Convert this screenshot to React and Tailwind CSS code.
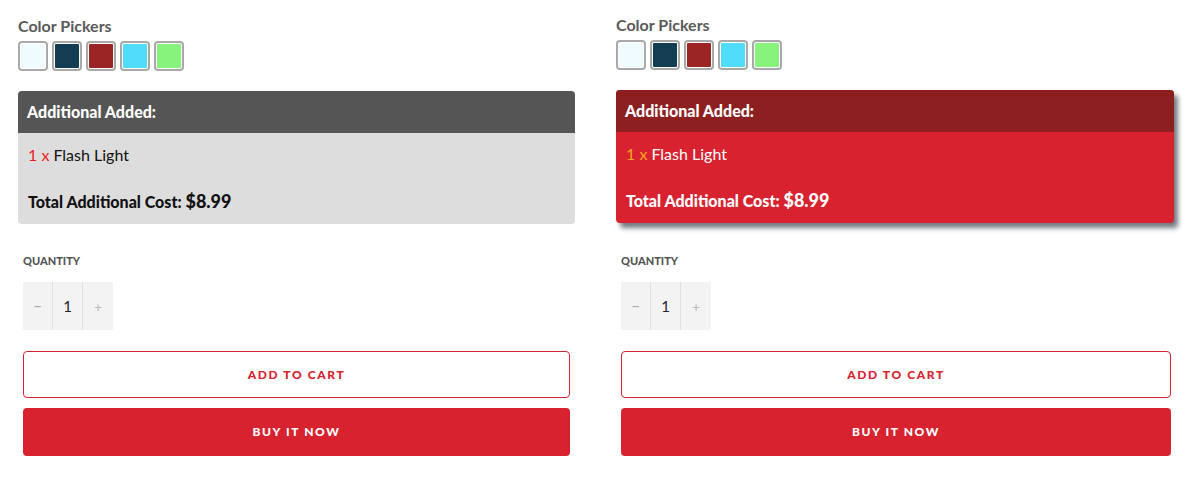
// App.jsx — two side-by-side product option panels (neutral / highlighted)

import React from 'react';

const SWATCHES = ['#f0fbff', '#123d52', '#9b2525', '#50dcfb', '#88f37c'];

function Swatch({ color }) {
  return (
    <div className="w-[30px] h-[30px] rounded-[4px] border-2 border-[#a9a9a9] bg-white p-px">
      <div className="w-full h-full rounded-[1px]" style={{ backgroundColor: color }} />
    </div>
  );
}

function AddedBox({ highlighted }) {
  // highlighted: red theme with a drop shadow, otherwise gray
  const wrap = highlighted
    ? 'bg-[#d8222f] text-white shadow-[4px_5px_5px_rgba(40,50,60,0.65)]'
    : 'bg-[#dddddd] text-[#111]';
  const head = highlighted ? 'bg-[#8e1f20]' : 'bg-[#555555]';
  const qty = highlighted ? 'text-[#f5a623]' : 'text-[#ee1c25]';
  return (
    <div className={`rounded-[4px] overflow-hidden ${wrap}`}>
      <div className={`h-[42px] flex items-center px-[9px] text-white font-black text-[16px] ${head}`}>
        Additional Added:
      </div>
      <div className="px-[10px] pt-[10px] pb-[10px]">
        <div className="text-[16px] leading-6">
          <span className={qty}>1 x</span> Flash Light
        </div>
        <div className="mt-[22px] leading-6 font-black text-[16px]">
          Total Additional Cost: <span className="text-[18px]">$8.99</span>
        </div>
      </div>
    </div>
  );
}

function Quantity() {
  return (
    <div className="flex h-[48px] w-[90px] bg-[#f3f3f3] text-[#222]">
      <div className="w-[30px] flex items-center justify-center text-[#aaa] text-[15px] border-r border-[#e2e2e2]">−</div>
      <div className="w-[30px] flex items-center justify-center text-[15px] border-r border-[#e2e2e2]">1</div>
      <div className="w-[30px] flex items-center justify-center text-[#bbb] text-[14px]">+</div>
    </div>
  );
}

function Panel({ highlighted, boxWidth, btnWidth, top, qtyGap }) {
  return (
    <div className={`flex flex-col ${top}`} style={{ width: boxWidth }}>
      <div className="text-[16px] font-bold text-[#5a5a5a] leading-6">Color Pickers</div>
      <div className="flex gap-[4px] mt-[3px]">
        {SWATCHES.map((c) => (
          <Swatch key={c} color={c} />
        ))}
      </div>
      <div className="mt-[20px]">
        <AddedBox highlighted={highlighted} />
      </div>
      <div className="pl-[5px] flex flex-col" style={{ width: btnWidth + 5 }}>
        <div className={`${qtyGap} text-[11px] font-black text-[#555] leading-4 uppercase`}>Quantity</div>
        <div className="mt-[13px]">
          <Quantity />
        </div>
        <button className="mt-[21px] h-[47px] w-full rounded-[4px] border border-[#d8222f] bg-white text-[#d8222f] text-[12px] font-black tracking-[1.6px] uppercase">
          Add to cart
        </button>
        <button className="mt-[10px] h-[48px] w-full rounded-[4px] bg-[#d8222f] text-white text-[12px] font-black tracking-[1.6px] uppercase">
          Buy it now
        </button>
      </div>
    </div>
  );
}

export default function App() {
  return (
    <div
      className="w-[1200px] h-[480px] bg-white flex gap-[41px] pl-[18px]"
      style={{ fontFamily: 'Lato, "Liberation Sans", sans-serif' }}
    >
      <Panel highlighted={false} boxWidth={557} btnWidth={547} top="pt-[14px]" qtyGap="mt-[29px]" />
      <Panel highlighted boxWidth={558} btnWidth={550} top="pt-[13px]" qtyGap="mt-[30px]" />
    </div>
  );
}
